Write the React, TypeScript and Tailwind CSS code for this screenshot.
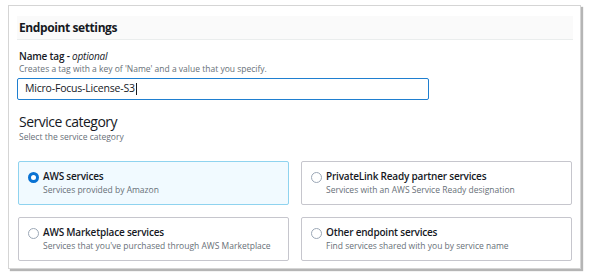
import { useState } from 'react';

type Option = { id: string; title: string; desc: string };

const options: Option[] = [
  { id: 'aws', title: 'AWS services', desc: 'Services provided by Amazon' },
  { id: 'partner', title: 'PrivateLink Ready partner services', desc: 'Services with an AWS Service Ready designation' },
  { id: 'marketplace', title: 'AWS Marketplace services', desc: "Services that you've purchased through AWS Marketplace" },
  { id: 'other', title: 'Other endpoint services', desc: 'Find services shared with you by service name' },
];

function Radio({ checked }: { checked: boolean }) {
  return checked ? (
    <span className="mt-[3px] h-[11px] w-[11px] shrink-0 rounded-full border-[3px] border-[#0972d3] bg-white" />
  ) : (
    <span className="mt-[3px] h-[11px] w-[11px] shrink-0 rounded-full border border-[#9ba7b6] bg-white" />
  );
}

export default function App() {
  const [selected, setSelected] = useState('aws');

  return (
    <div className="h-[280px] w-[589px] bg-white pl-[8px] pt-[5px] font-['Open_Sans',sans-serif] text-[#16191f]">
      <div className="h-[264px] w-[573px] border border-[#d5d5d5] shadow-[2px_2px_1px_#b5b5b5] pl-[8px] pr-[7px] pt-[10px]">
        <div className="flex h-[24px] items-center border-b border-[#eaeded] bg-[#fafafa] pl-[2px]">
          <h2 className="text-[12px] font-bold tracking-[-0.4px]">Endpoint settings</h2>
        </div>

        <div className="pl-[2px] pt-[10px]">
          <div className="text-[10px] font-semibold leading-[13px] tracking-[-0.2px]">
            Name tag - <span className="font-normal italic">optional</span>
          </div>
          <div className="text-[8.5px] leading-[12px] text-[#687078]">
            Creates a tag with a key of 'Name' and a value that you specify.
          </div>
        </div>
        <div className="mt-[3px] flex h-[22px] w-[412px] items-center rounded-[2px] border-[1.5px] border-[#1f7fd0] pl-[7px] text-[10.5px] tracking-[-0.2px]">
          Micro-Focus-License-S3
          <span className="ml-[1px] h-[12px] w-px bg-[#16191f]" />
        </div>

        <div className="pl-[2px] pt-[13px]">
          <h3 className="text-[14px] leading-[18px] tracking-[-0.5px]">Service category</h3>
          <div className="text-[8.5px] leading-[12px] text-[#687078]">Select the service category</div>
        </div>

        <div className="mt-[18px] grid grid-cols-[271px_271px] gap-x-[12px] gap-y-[12px] pl-[1px]">
          {options.map((o) => {
            const on = selected === o.id;
            return (
              <button
                key={o.id}
                onClick={() => setSelected(o.id)}
                className={`flex h-[44px] items-start gap-[4px] rounded-[2px] border pl-[9px] pt-[7px] text-left ${
                  on ? 'border-[#8fd3ef] bg-[#f1faff]' : 'border-[#c6c6cd] bg-white'
                }`}
              >
                <Radio checked={on} />
                <div>
                  <div className="text-[10px] font-semibold leading-[14px] tracking-[-0.2px]">{o.title}</div>
                  <div className="mt-[1px] text-[8.5px] leading-[12px] text-[#687078]">{o.desc}</div>
                </div>
              </button>
            );
          })}
        </div>
      </div>
    </div>
  );
}
